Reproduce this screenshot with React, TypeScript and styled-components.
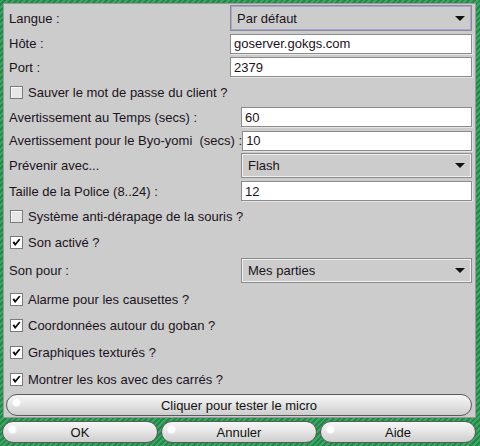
import React from 'react';
import styled, { createGlobalStyle } from 'styled-components';

const GlobalStyle = createGlobalStyle`
  html, body {
    margin: 0;
    padding: 0;
  }
  body {
    font-family: 'Liberation Sans', Arial, sans-serif;
    font-size: 13px;
    color: #1c121c;
  }
`;

const Window = styled.div`
  width: 480px;
  height: 446px;
  box-sizing: border-box;
  padding-top: 3px;
  background: repeating-linear-gradient(
    -45deg,
    #3da564 0px,
    #3da564 2px,
    #24884a 2px,
    #24884a 4px
  );
  display: flex;
  flex-direction: column;
  overflow: hidden;
`;

const Panel = styled.div`
  margin-left: 3px;
  width: 473px;
  box-sizing: border-box;
  background: #cccccc;
  border: 1px solid #9a9a9a;
  padding: 0 3px 0 4px;
  display: flex;
  flex-direction: column;
`;

const Row = styled.div<{ $h: number }>`
  height: ${(p) => p.$h}px;
  display: flex;
  align-items: center;
`;

const Label = styled.span`
  flex: 1;
  white-space: nowrap;
  padding-left: 1px;
`;

const Field = styled.div<{ $w: number }>`
  width: ${(p) => p.$w}px;
  height: 20px;
  box-sizing: border-box;
  background: #ffffff;
  border: 1px solid #8c8c8c;
  box-shadow: 1px 1px 0 #e4e4e4;
  padding: 0 3px;
  display: flex;
  align-items: center;
  white-space: nowrap;
`;

const Combo = styled.div<{ $w: number; $focus?: boolean }>`
  width: ${(p) => p.$w}px;
  height: ${(p) => (p.$focus ? 26 : 25)}px;
  box-sizing: border-box;
  background: #cccccc;
  border: 1px solid #8c8c8c;
  box-shadow: inset 0 0 0 1px ${(p) => (p.$focus ? '#a8a4dc' : '#f0f0f0')};
  padding: 0 6px 0 6px;
  display: flex;
  align-items: center;
  justify-content: space-between;
`;

const Arrow = styled.span`
  width: 0;
  height: 0;
  border-left: 5px solid transparent;
  border-right: 5px solid transparent;
  border-top: 5px solid #111;
`;

const Check = styled.span<{ $on?: boolean }>`
  width: 13px;
  height: 13px;
  box-sizing: border-box;
  margin: 0 5px 0 2px;
  border: 1px solid #7a7a7a;
  background: ${(p) => (p.$on ? '#ffffff' : '#e6e6e6')};
  box-shadow: inset 1px 1px 0 ${(p) => (p.$on ? '#ffffff' : '#fafafa')};
  display: flex;
  align-items: center;
  justify-content: center;
`;

const Pill = styled.div`
  position: relative;
  height: 22px;
  box-sizing: border-box;
  border: 1px solid #5a5a5a;
  border-radius: 11px;
  background: linear-gradient(#f6f6f6 0%, #e4e4e4 50%, #cdcdcd 100%);
  display: flex;
  align-items: center;
  justify-content: center;
  color: #111;
  overflow: hidden;

  &::before {
    content: '';
    position: absolute;
    left: 5px;
    top: 3px;
    width: 9px;
    height: 9px;
    border-radius: 50%;
    background: radial-gradient(circle, #ffffff 0%, #ffffff 45%, rgba(255, 255, 255, 0) 80%);
  }
`;

const MicroButton = styled(Pill)`
  flex: 1;
  margin: 0 0 0 -2px;
`;

const Footer = styled.div`
  margin-top: 3px;
  padding: 0 4px 0 2px;
  display: grid;
  grid-template-columns: repeat(3, 1fr);
  gap: 3px;
`;

const Tick = () => (
  <svg width="9" height="9" viewBox="0 0 9 9">
    <path d="M1 4.5 L3.2 7.5 L8 1.5 L7 1.2 L3.3 5.8 L2.2 3.8 Z" fill="#000" stroke="#000" strokeWidth="0.8" />
  </svg>
);

const CheckRow = ({ h, on, text }: { h: number; on?: boolean; text: string }) => (
  <Row $h={h}>
    <Check $on={on}>{on && <Tick />}</Check>
    <span>{text}</span>
  </Row>
);

const App = () => {
  return (
    <>
      <GlobalStyle />
      <Window>
        <Panel>
          <Row $h={28}>
            <Label>Langue :</Label>
            <Combo $w={242} $focus>
              <span>Par défaut</span>
              <Arrow />
            </Combo>
          </Row>
          <Row $h={23}>
            <Label>Hôte :</Label>
            <Field $w={242}>goserver.gokgs.com</Field>
          </Row>
          <Row $h={24}>
            <Label>Port :</Label>
            <Field $w={242}>2379</Field>
          </Row>
          <CheckRow h={26} text="Sauver le mot de passe du client ?" />
          <Row $h={24}>
            <Label>Avertissement au Temps (secs) :</Label>
            <Field $w={231}>60</Field>
          </Row>
          <Row $h={23}>
            <Label>Avertissement pour le Byo-yomi&nbsp; (secs) :</Label>
            <Field $w={231}>10</Field>
          </Row>
          <Row $h={27}>
            <Label>Prévenir avec...</Label>
            <Combo $w={231}>
              <span>Flash</span>
              <Arrow />
            </Combo>
          </Row>
          <Row $h={24}>
            <Label>Taille de la Police (8..24) :</Label>
            <Field $w={231}>12</Field>
          </Row>
          <CheckRow h={26} text="Système anti-dérapage de la souris ?" />
          <CheckRow h={26} on text="Son activé ?" />
          <Row $h={30}>
            <Label>Son pour :</Label>
            <Combo $w={231}>
              <span>Mes parties</span>
              <Arrow />
            </Combo>
          </Row>
          <CheckRow h={28} on text="Alarme pour les causettes ?" />
          <CheckRow h={25} on text="Coordonnées autour du goban ?" />
          <CheckRow h={28} on text="Graphiques texturés ?" />
          <CheckRow h={27} on text="Montrer les kos avec des carrés ?" />
          <Row $h={24}>
            <MicroButton>Cliquer pour tester le micro</MicroButton>
          </Row>
        </Panel>
        <Footer>
          <Pill>OK</Pill>
          <Pill>Annuler</Pill>
          <Pill>Aide</Pill>
        </Footer>
      </Window>
    </>
  );
};

export default App;
